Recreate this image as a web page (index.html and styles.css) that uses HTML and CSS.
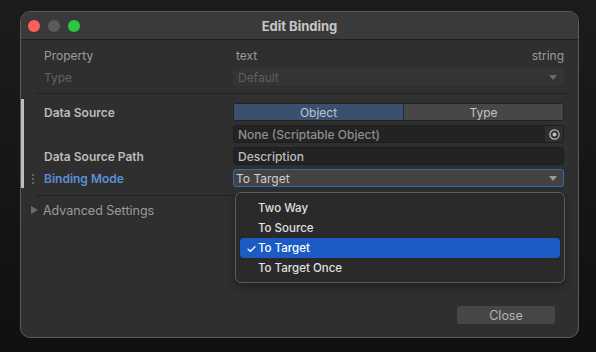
FILE: index.html
```html
<!DOCTYPE html>
<html lang="en">
<head>
    <meta charset="UTF-8">
    <meta name="viewport" content="width=device-width, initial-scale=1.0">
    <title>Edit Binding</title>
    <link rel="stylesheet" href="styles.css">
</head>
<body>
    <div class="window">
        <div class="titlebar">
            <div class="lights">
                <span class="light red"></span>
                <span class="light gray"></span>
                <span class="light green"></span>
            </div>
            <div class="title">Edit Binding</div>
        </div>

        <div class="content">
            <div class="props">
                <div class="row">
                    <div class="label">Property</div>
                    <div class="value prop-value">
                        <span>text</span>
                        <span>string</span>
                    </div>
                </div>
                <div class="row">
                    <div class="label dim">Type</div>
                    <div class="value field select disabled">
                        <span>Default</span>
                        <span class="arrow"></span>
                    </div>
                </div>
            </div>

            <div class="divider"></div>

            <div class="binding">
                <div class="row">
                    <div class="label strong">Data Source</div>
                    <div class="value toggle">
                        <div class="seg active">Object</div>
                        <div class="seg">Type</div>
                    </div>
                </div>
                <div class="row">
                    <div class="label"></div>
                    <div class="value field dark object-field">
                        <span class="muted">None (Scriptable Object)</span>
                        <span class="picker">
                            <svg width="11" height="11" viewBox="0 0 11 11">
                                <circle cx="5.5" cy="5.5" r="4.6" fill="none" stroke="#bdbdbd" stroke-width="1.2"/>
                                <circle cx="5.5" cy="5.5" r="2" fill="#bdbdbd"/>
                            </svg>
                        </span>
                    </div>
                </div>
                <div class="row">
                    <div class="label strong">Data Source Path</div>
                    <div class="value field dark">
                        <span class="bright">Description</span>
                    </div>
                </div>
                <div class="row">
                    <div class="label strong active-label">
                        <span class="handle">
                            <i></i><i></i><i></i>
                        </span>
                        Binding Mode
                    </div>
                    <div class="value field select focused">
                        <span>To Target</span>
                        <span class="arrow"></span>
                    </div>
                </div>
            </div>

            <div class="divider"></div>

            <div class="advanced">
                <span class="tri"></span>
                Advanced Settings
            </div>

            <div class="footer">
                <button class="close-btn">Close</button>
            </div>

            <div class="menu">
                <div class="item">Two Way</div>
                <div class="item">To Source</div>
                <div class="item selected"><span class="check">✓</span>To Target</div>
                <div class="item">To Target Once</div>
            </div>
        </div>
    </div>
</body>
</html>
```

FILE: styles.css
```css
* {
    box-sizing: border-box;
    margin: 0;
    padding: 0;
}

body {
    font-family: Inter, 'Noto Sans', sans-serif;
    font-size: 12px;
    background: linear-gradient(#1c1c1c, #101010);
    width: 596px;
    height: 352px;
    padding: 11px 0 0 20px;
    overflow: hidden;
}

.window {
    width: 559px;
    height: 327px;
    background-color: #2f2f2f;
    border: 1px solid #5a5a5a;
    border-radius: 10px;
    overflow: hidden;
    display: flex;
    flex-direction: column;
}

.titlebar {
    height: 28px;
    background-color: #3a3a3a;
    border-bottom: 1px solid #1f1f1f;
    display: flex;
    align-items: center;
    position: relative;
    flex-shrink: 0;
}

.lights {
    display: flex;
    gap: 8px;
    padding-left: 7px;
}

.light {
    width: 12px;
    height: 12px;
    border-radius: 50%;
}

.red { background-color: #fe5f57; }
.gray { background-color: #5b5b5b; }
.green { background-color: #2ac840; }

.title {
    position: absolute;
    left: 0;
    right: 0;
    text-align: center;
    font-weight: 700;
    font-size: 13px;
    color: #c6c6c6;
}

.content {
    flex: 1;
    position: relative;
    display: flex;
    flex-direction: column;
    padding-top: 6px;
}

.props {
    display: flex;
    flex-direction: column;
    gap: 4px;
    padding: 0 14px 0 23px;
}

.row {
    display: grid;
    grid-template-columns: 189px 1fr;
    height: 18px;
    align-items: center;
}

.label {
    color: #9b9b9b;
    white-space: nowrap;
}

.label.dim {
    color: #626262;
}

.label.strong {
    font-weight: 600;
    color: #bcbcbc;
}

.label.active-label {
    color: #5b8fd6;
    position: relative;
}

.handle {
    position: absolute;
    left: -12px;
    top: 3px;
    display: flex;
    flex-direction: column;
    gap: 2px;
}

.handle i {
    display: block;
    width: 2px;
    height: 2px;
    background-color: #777;
    border-radius: 1px;
}

.value {
    height: 18px;
    display: flex;
    align-items: center;
    justify-content: space-between;
}

.prop-value {
    color: #9b9b9b;
    padding: 0 0 0 3px;
}

.field {
    border-radius: 3px;
    padding: 0 4px;
    border: 1px solid transparent;
}

.field.disabled {
    background-color: #343434;
    color: #5e5e5e;
}

.field.dark {
    background-color: #232323;
    border-color: #1e1e1e;
    color: #8f8f8f;
}

.field.focused {
    background-color: #434343;
    border-color: #2e6bb0;
    color: #d0d0d0;
    padding-left: 2px;
}

.bright {
    color: #bdbdbd;
    font-weight: 500;
}

.muted {
    font-weight: 500;
}

.arrow {
    width: 0;
    height: 0;
    border-left: 4px solid transparent;
    border-right: 4px solid transparent;
    border-top: 5px solid #9a9a9a;
    margin-right: 2px;
}

.disabled .arrow {
    border-top-color: #6a6a6a;
}

.object-field {
    padding-right: 0;
}

.picker {
    width: 18px;
    height: 16px;
    background-color: #2f2f2f;
    display: flex;
    align-items: center;
    justify-content: center;
    border-radius: 0 3px 3px 0;
}

.divider {
    height: 1px;
    background-color: #222;
    margin: 7px 10px 0 15px;
}

.binding {
    margin-top: 5px;
    border-left: 3px solid #bdbdbd;
    padding: 4px 14px 1px 20px;
    display: flex;
    flex-direction: column;
    gap: 4px;
}

.toggle {
    border-radius: 3px;
    overflow: hidden;
    border: 1px solid #222;
    background-color: #474747;
}

.seg {
    flex: 1;
    height: 100%;
    display: flex;
    align-items: center;
    justify-content: center;
    color: #c4c4c4;
}

.seg.active {
    flex: 0 0 170px;
    background-color: #3b506d;
    color: #b9c6d6;
    border-right: 1px solid #2a2a2a;
}

.advanced {
    display: flex;
    align-items: center;
    gap: 5px;
    margin: 6px 0 0 10px;
    height: 16px;
    color: #9b9b9b;
    font-size: 12.5px;
}

.tri {
    width: 0;
    height: 0;
    border-top: 4.5px solid transparent;
    border-bottom: 4.5px solid transparent;
    border-left: 7px solid #6b6b6b;
}

.footer {
    margin-top: auto;
    display: flex;
    justify-content: flex-end;
    padding: 0 23px 13px 0;
}

.close-btn {
    width: 98px;
    height: 18px;
    background-color: #474747;
    border: none;
    border-radius: 3px;
    color: #b3b3b3;
    font-family: Inter, 'Noto Sans', sans-serif;
    font-size: 12.5px;
}

.menu {
    position: absolute;
    left: 214px;
    top: 152px;
    width: 330px;
    height: 91px;
    background-color: #2a2a2a;
    border: 1px solid #5c5c5c;
    border-radius: 6px;
    padding: 5px 4px;
    box-shadow: 0 3px 8px rgba(0, 0, 0, 0.4);
}

.item {
    height: 20px;
    display: flex;
    align-items: center;
    padding-left: 18px;
    color: #e0e0e0;
    font-size: 11.5px;
    font-weight: 500;
    border-radius: 4px;
    position: relative;
}

.item.selected {
    background-color: #1b5bc3;
    color: #fff;
}

.check {
    position: absolute;
    left: 6px;
    font-size: 12px;
}
```
